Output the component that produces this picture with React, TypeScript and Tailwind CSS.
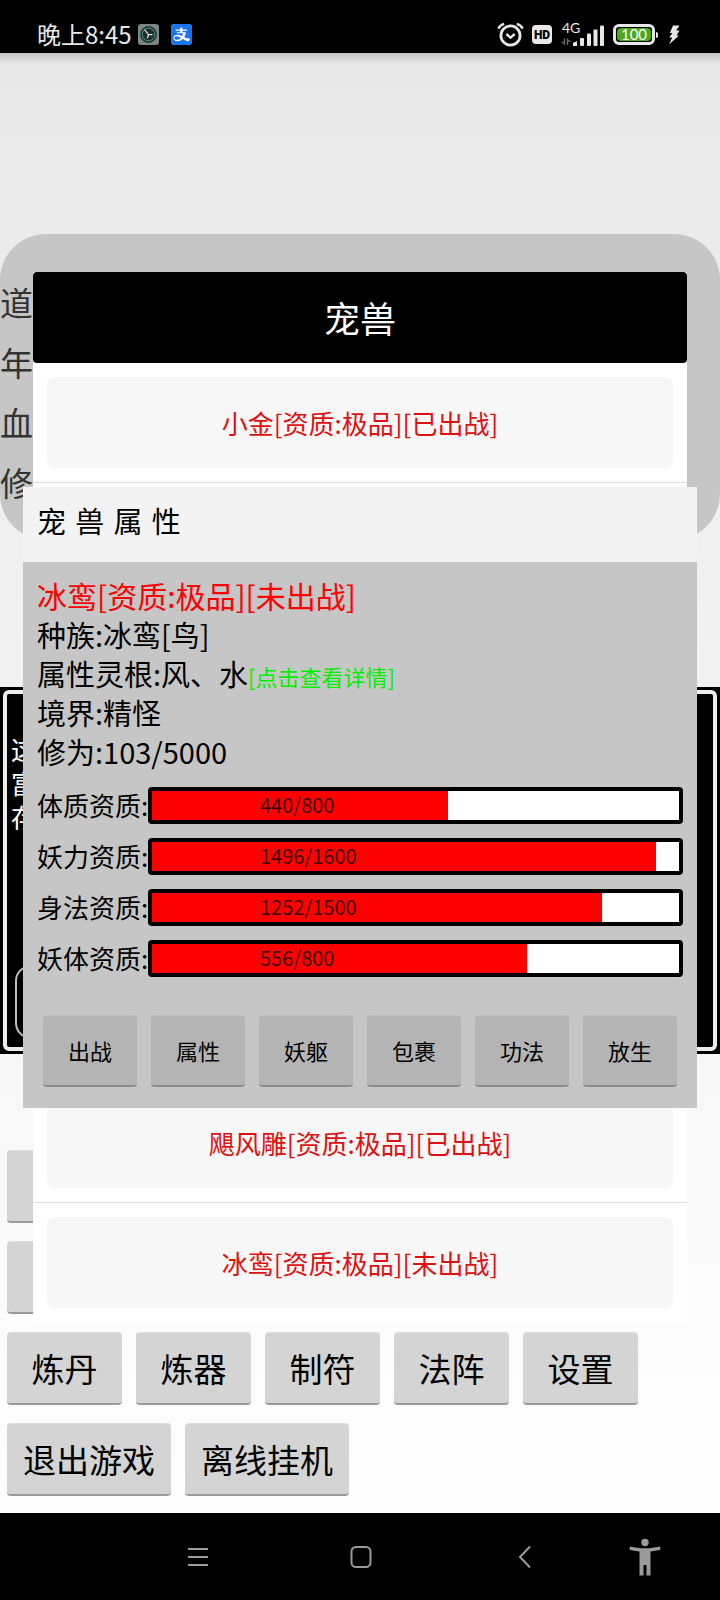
import { AiFillAlipaySquare } from "react-icons/ai";

const attributes = [
  { label: "体质资质", value: 440, max: 800 },
  { label: "妖力资质", value: 1496, max: 1600 },
  { label: "身法资质", value: 1252, max: 1500 },
  { label: "妖体资质", value: 556, max: 800 },
];

const petActions = ["出战", "属性", "妖躯", "包裹", "功法", "放生"];

const menuRows = [
  ["炼丹", "炼器", "制符", "法阵", "设置"],
  ["退出游戏", "离线挂机"],
];

const StatusBar = () => {
  return (
    <header className="flex h-[53px] items-center justify-between bg-black pt-4 pr-10 pl-[37px] text-[#e8e8e8]">
      <div className="flex items-center">
        <span className="pb-0.5 text-[24px] leading-6">晚上8:45</span>
        {/* Clock app */}
        <svg className="ml-1.5 h-[21px] w-[21px]" viewBox="0 0 21 21" fill="none">
          <rect width="21" height="21" rx="3" fill="#7d8683" />
          <circle cx="10.5" cy="10.5" r="8.2" fill="#1f2b2b" stroke="#39534c" strokeWidth="1" />
          <circle cx="10.5" cy="10.5" r="6.3" stroke="#4d9c86" strokeWidth="1" />
          <path d="M6.5 5.5l4 5.2h4M10.5 10.7l-1.2 3.5" stroke="#dfe5e2" strokeWidth="1.2" />
        </svg>
        <span className="ml-3 flex h-[21px] w-[21px] items-center justify-center overflow-hidden rounded-sm bg-white">
          <AiFillAlipaySquare className="h-[29px] w-[29px] shrink-0 text-[#1a73f0]" />
        </span>
      </div>

      <div className="flex items-center">
        {/* Alarm */}
        <svg className="h-[25px] w-[27px]" viewBox="0 0 27 25" fill="none" stroke="#e8e8e8">
          <circle cx="13.5" cy="13.5" r="9.6" strokeWidth="2.8" />
          <path d="M9.3 12l4.2 3.6 4.2-3.6" strokeWidth="2.4" />
          <path d="M1.3 6.6C2.4 4.4 4.4 2.6 7.2 1.8M25.7 6.6c-1.1-2.2-3.1-4-5.9-4.8" strokeWidth="2.4" />
        </svg>
        <span className="ml-2 flex h-[19px] w-5 items-center justify-center rounded bg-[#e8e8e8] font-['Roboto',sans-serif] text-[12px] leading-none font-black text-black">
          HD
        </span>
        {/* Signal */}
        <svg className="ml-2 h-7 w-[46px] overflow-visible" viewBox="0 -2 46 28">
          <text x="2" y="10" fill="#e8e8e8" fontSize="14" fontFamily="Lato, sans-serif">
            4G
          </text>
          <path
            d="M1.500 19.500h3v-4M4.500 15.500V22M7.500 22v-6.500M7.500 18h3"
            stroke="#6b6b6b"
            strokeWidth="1.4"
            fill="none"
          />
          <g fill="#e8e8e8">
            <path d="M13 23v-3l4-2v5z" />
            <rect x="20" y="15" width="4" height="8" rx="1" />
            <rect x="27" y="10.500" width="4" height="12.500" rx="1" />
            <rect x="33.500" y="6.500" width="4" height="16.500" rx="1" />
            <rect x="40" y="2.500" width="4" height="20.500" rx="1" />
          </g>
        </svg>
        {/* Battery */}
        <div className="ml-[7px] flex items-center">
          <span className="flex h-[21px] w-[42px] rounded-md border-[3px] border-[#e8e8e8] p-px">
            <span className="flex flex-1 items-center justify-center rounded-sm bg-[#4ca81c] font-['Lato',sans-serif] text-[15px] leading-none text-white">
              100
            </span>
          </span>
          <span className="ml-px h-1.5 w-0.5 rounded-r bg-[#e8e8e8]" />
        </div>
        <svg className="ml-2.5 h-5 w-3" viewBox="0 0 12 20" fill="#e8e8e8">
          <path d="M5 0.500h6.500L8.200 5.500h3.300L8.500 10.500h2.500L1 19.500l3.200-7H1.200l3.300-4.500H1.800z" />
        </svg>
      </div>
    </header>
  );
};

const menuButton =
  "h-[73px] min-w-[115px] rounded-sm border-t border-b-2 border-t-[#dedede] border-b-[#9a9a9a] bg-[#d4d4d4] px-4 text-[33px] leading-10 text-black";

const GameScreen = () => {
  return (
    <>
      {/* Character panel */}
      <section className="mt-[181px] rounded-[46px] bg-[#c6c6c6] pt-[38px] pb-7 text-[33px] leading-[60px] text-[#333]">
        <p>道</p>
        <p>年</p>
        <p>血</p>
        <p>修</p>
      </section>

      {/* Event log */}
      <section className="mt-[147px] flex h-[367px] flex-col bg-black p-[3px]">
        <div className="flex flex-1 flex-col justify-between rounded-md border-4 border-[#ececec] bg-black pt-[38px] pb-2">
          <div className="pl-1 text-[26px] leading-[34px] text-white">
            <p>这</p>
            <p>富</p>
            <p>存</p>
          </div>
          <div className="mr-12 ml-2 h-[74px] rounded-2xl border-2 border-[#bdbdbd]" />
        </div>
      </section>

      {/* Menu */}
      <section className="mt-24 flex flex-col gap-[18px] pb-[17px] pl-[7px]">
        <div className={menuButton + " w-28 self-start"} />
        <div className={menuButton + " w-28 self-start"} />
        {menuRows.map((row) => (
          <div key={row[0]} className="flex flex-wrap gap-[14px]">
            {row.map((name) => (
              <button key={name} type="button" className={menuButton}>
                {name}
              </button>
            ))}
          </div>
        ))}
      </section>
    </>
  );
};

const PetRow = ({ name, last }: { name: string; last?: boolean }) => {
  return (
    <li className={last ? "p-3.5" : "border-b border-[#dcdcdc] p-3.5"}>
      <button type="button" className="h-[91px] w-full rounded-lg bg-[#f7f7f7] text-[26px] text-[#e01010]">
        {name}
      </button>
    </li>
  );
};

const PetList = () => {
  return (
    <section className="absolute inset-x-[33px] top-[219px] bg-white">
      <h1 className="flex h-[91px] items-center justify-center rounded bg-black pb-px text-[36px] leading-10 text-white">
        宠兽
      </h1>
      <ul>
        <PetRow name="小金[资质:极品][已出战]" />
        {/* Rows behind the attribute dialog */}
        <li className="h-[600px]" />
        <PetRow name="飓风雕[资质:极品][已出战]" />
        <PetRow name="冰鸾[资质:极品][未出战]" last />
      </ul>
    </section>
  );
};

const AttributeBar = ({ label, value, max }: { label: string; value: number; max: number }) => {
  return (
    <div className="flex items-center">
      <span className="w-[111px] pb-0.5 text-[26px] leading-[34px] whitespace-nowrap">{label}:</span>
      <div className="relative h-[37px] flex-1 overflow-hidden rounded border-4 border-black bg-white">
        <div className="-mr-3 h-full">
          <div className="h-full bg-[#ff0000]" style={{ width: `${(value / max) * 100}%` }} />
        </div>
        <span className="absolute inset-y-0 left-[108px] flex items-center pb-0.5 text-[20px] text-[#3a0000]">
          {value}/{max}
        </span>
      </div>
    </div>
  );
};

const PetDialog = () => {
  return (
    <section role="dialog" aria-labelledby="pet-title" className="absolute inset-x-[23px] top-[434px] bg-[#c6c6c6] text-black">
      <h2
        id="pet-title"
        className="flex h-[75px] items-center bg-[#f3f3f3] pb-1 pl-3.5 font-['DejaVu_Sans','Noto_Sans_CJK_SC',sans-serif] text-[29px] leading-10"
      >
        宠 兽 属 性
      </h2>
      <div className="px-3.5 pt-3.5 text-[29px] leading-[39px]">
        <p className="text-[30px] text-[#ff0000]">冰鸾[资质:极品][未出战]</p>
        <p>种族:冰鸾[鸟]</p>
        <p>
          属性灵根:风、水
          <a href="#detail" className="text-[22px] leading-none text-[#00f000]">
            [点击查看详情]
          </a>
        </p>
        <p>境界:精怪</p>
        <p>修为:103/5000</p>
      </div>
      <div className="mt-4 flex flex-col gap-[14px] px-3.5">
        {attributes.map((item) => (
          <AttributeBar key={item.label} {...item} />
        ))}
      </div>
      <div className="mt-[38px] flex gap-[14px] px-5 pb-[21px]">
        {petActions.map((name) => (
          <button
            key={name}
            type="button"
            className="h-[72px] flex-1 rounded-sm border-t border-b-2 border-t-[#bdbdbd] border-b-[#8c8c8c] bg-[#b4b4b4] text-[22px]"
          >
            {name}
          </button>
        ))}
      </div>
    </section>
  );
};

const NavBar = () => {
  return (
    <nav className="flex h-[87px] items-center bg-black pl-[117px]">
      <button type="button" aria-label="菜单" className="flex flex-1 justify-center">
        <svg className="h-6 w-6" viewBox="0 0 24 24" stroke="#9a9a9a" strokeWidth="2">
          <path d="M2 4h20M2 12h20M2 20h20" />
        </svg>
      </button>
      <button type="button" aria-label="主页" className="flex flex-1 justify-center">
        <svg className="h-6 w-6" viewBox="0 0 24 24" fill="none" stroke="#9a9a9a" strokeWidth="2">
          <rect x="2.500" y="2" width="19" height="20" rx="4.500" />
        </svg>
      </button>
      <button type="button" aria-label="返回" className="flex flex-1 justify-center">
        <svg className="h-6 w-6" viewBox="0 0 24 24" fill="none" stroke="#9a9a9a" strokeWidth="2">
          <path d="M18 1.500L8 12l10 10.500" />
        </svg>
      </button>
      <button type="button" aria-label="无障碍" className="mr-[59px] ml-6 w-8">
        <svg className="h-[38px] w-8" viewBox="0 0 32 38" fill="#9a9a9a">
          <circle cx="16" cy="4.500" r="3.700" />
          <path d="M1 8.500c10 2.400 20 2.400 30 0l.5 3.300c-3.300.9-6.500 1.400-10 1.600V37.500h-4V27h-3v10.500h-4V13.400c-3.500-.2-6.700-.7-10-1.600z" />
        </svg>
      </button>
    </nav>
  );
};

const App = () => {
  return (
    <div className="flex min-h-screen flex-col font-['Noto_Sans_CJK_SC',sans-serif]">
      <StatusBar />
      <main className="relative flex flex-1 flex-col bg-linear-to-b from-[#e8e8e8] via-[#f4f4f4] to-[#fefefe]">
        <div className="absolute inset-x-0 top-0 h-3 bg-linear-to-b from-[#c4c4c4] to-transparent" />
        <GameScreen />
        <PetList />
        <PetDialog />
      </main>
      <NavBar />
    </div>
  );
};

export default App;
